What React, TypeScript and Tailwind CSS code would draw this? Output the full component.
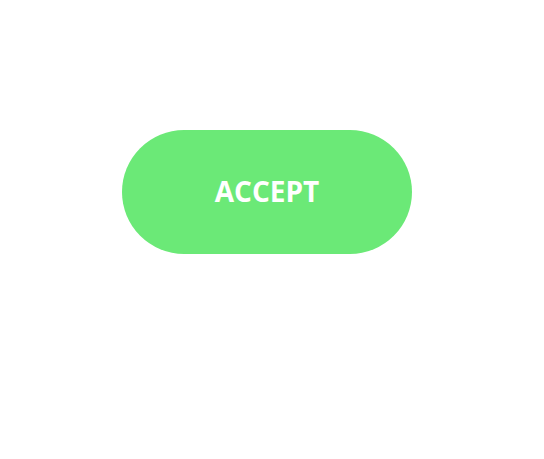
export default function App() {
  return (
    <main className="min-h-screen bg-white pt-[130px] pl-[122px]">
      <button
        className="flex h-[124px] w-[290px] items-center justify-center rounded-full bg-[#6be977] pb-[3px] text-[28px] leading-none font-bold text-white"
        style={{ fontFamily: '"Open Sans", sans-serif' }}
      >
        ACCEPT
      </button>
    </main>
  );
}
